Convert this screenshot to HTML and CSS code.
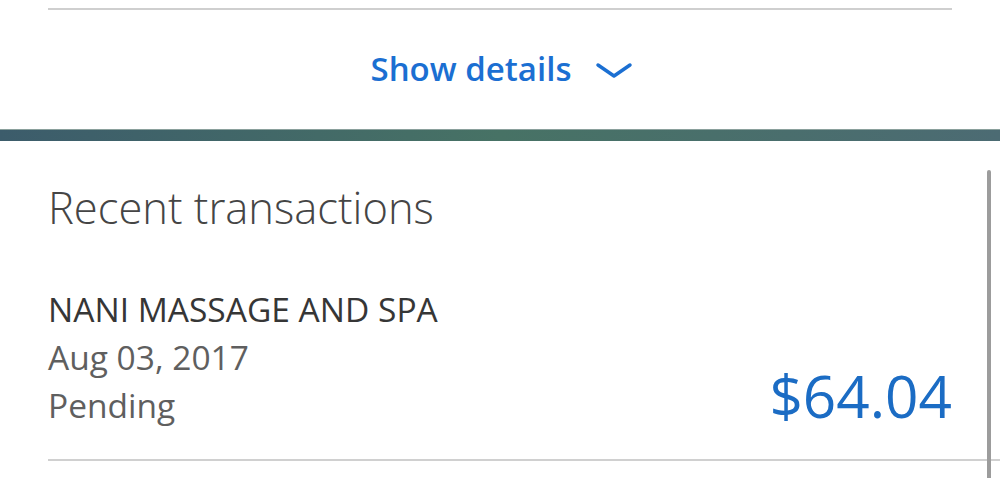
FILE: index.html
```html
<!DOCTYPE html>
<html>
<head>
  <meta name="viewport" content="width=device-width,initial-scale=1.0">
  <title>Account</title>
  <link rel="stylesheet" href="styles.css">
</head>
<body>
  <div class="summary">
    <div class="summary-rule"></div>
    <button class="details-toggle" type="button">
      <span>Show details</span>
      <svg class="chevron" width="38" height="18" viewBox="0 0 38 18">
        <polyline points="3,3 19,14 35,3" fill="none" stroke="currentColor" stroke-width="3.5" stroke-linecap="round" stroke-linejoin="round"/>
      </svg>
    </button>
  </div>

  <div class="band"></div>

  <section class="recent">
    <h2>Recent transactions</h2>
    <ul class="tx-list">
      <li class="tx">
        <div class="tx-info">
          <div class="tx-name">NANI MASSAGE AND SPA</div>
          <div class="tx-meta">Aug 03, 2017</div>
          <div class="tx-meta">Pending</div>
        </div>
        <div class="tx-amount">$64.04</div>
      </li>
    </ul>
    <div class="scrollbar"></div>
  </section>
</body>
</html>
```

FILE: styles.css
```css
body {
  margin: 0;
  background: #fff;
  font-family: "Open Sans", "Liberation Sans", sans-serif;
  overflow: hidden;
}

.summary { padding: 8px 48px 0; }
.summary-rule { border-top: 2px solid #cfcfcf; }

.details-toggle {
  display: flex;
  align-items: center;
  justify-content: center;
  gap: 24px;
  width: 100%;
  height: 119px;
  border: none;
  background: none;
  padding: 0 0 0 4px;
  color: #1b6fd2;
  font-family: inherit;
  font-size: 33px;
  font-weight: 600;
  cursor: pointer;
}
.details-toggle span { margin-top: -2px; }
.chevron { margin-top: 2px; }

.band {
  height: 11px;
  border-top: 1px solid #8aa09c;
  background: linear-gradient(90deg, #3c5c6b 0%, #477265 50%, #4c6b73 100%);
}

.recent {
  position: relative;
  padding-top: 42px;
  height: 295px;
}
.recent h2 {
  margin: 0 48px;
  font-size: 43.5px;
  font-weight: 300;
  line-height: 50px;
  color: #454545;
}

.tx-list { list-style: none; margin: 52px 0 0 48px; padding: 0; }
.tx {
  display: flex;
  justify-content: space-between;
  align-items: last baseline;
  padding: 0 48px 30px 0;
  border-bottom: 2px solid #d0d0d0;
}
.tx-info { font-size: 33.5px; line-height: 48px; }
.tx-name { color: #363636; }
.tx-meta { color: #5f5f5f; }
.tx-amount { font-size: 58.5px; color: #1b6cc4; line-height: 1; }

.scrollbar {
  position: absolute;
  top: 29px;
  right: 9px;
  width: 4px;
  height: 320px;
  border-radius: 2px;
  background: #9c9c9c;
}
```
